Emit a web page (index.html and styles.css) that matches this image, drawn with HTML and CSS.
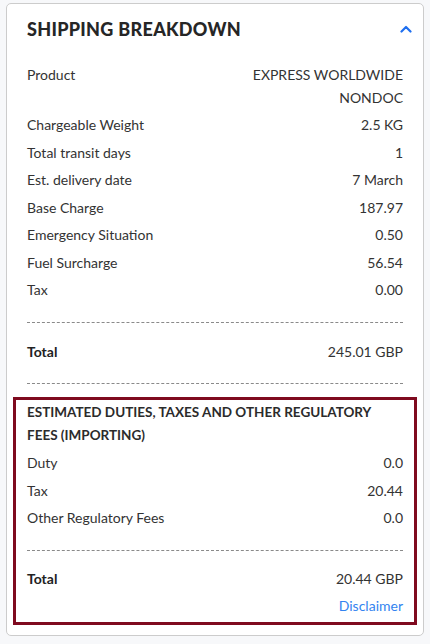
FILE: index.html
```html
<!DOCTYPE html>
<html>
<head>
<meta charset="utf-8">
<link rel="stylesheet" href="styles.css">
</head>
<body>
<div class="card">
  <div class="card-header">
    <h2 class="title">SHIPPING BREAKDOWN</h2>
    <svg class="chevron" width="12" height="8" viewBox="0 0 12 8"><path d="M1.5 6.5 L6 2 L10.5 6.5" fill="none" stroke="#1f6ff0" stroke-width="2.2" stroke-linecap="round" stroke-linejoin="round"/></svg>
  </div>
  <div class="rows">
    <div class="row"><span class="label">Product</span><span class="value narrow">EXPRESS WORLDWIDE NONDOC</span></div>
    <div class="row"><span class="label">Chargeable Weight</span><span class="value">2.5 KG</span></div>
    <div class="row"><span class="label">Total transit days</span><span class="value">1</span></div>
    <div class="row"><span class="label">Est. delivery date</span><span class="value">7 March</span></div>
    <div class="row"><span class="label">Base Charge</span><span class="value">187.97</span></div>
    <div class="row"><span class="label">Emergency Situation</span><span class="value">0.50</span></div>
    <div class="row"><span class="label">Fuel Surcharge</span><span class="value">56.54</span></div>
    <div class="row"><span class="label">Tax</span><span class="value">0.00</span></div>
  </div>
  <hr class="dash dash-a">
  <div class="row total"><span class="label">Total</span><span class="value">245.01 GBP</span></div>
  <hr class="dash dash-b">
  <div class="duties">
    <h3 class="duties-title">ESTIMATED DUTIES, TAXES AND OTHER REGULATORY FEES (IMPORTING)</h3>
    <div class="rows">
      <div class="row"><span class="label">Duty</span><span class="value">0.0</span></div>
      <div class="row"><span class="label">Tax</span><span class="value">20.44</span></div>
      <div class="row"><span class="label">Other Regulatory Fees</span><span class="value">0.0</span></div>
    </div>
    <hr class="dash dash-c">
    <div class="row total"><span class="label">Total</span><span class="value">20.44 GBP</span></div>
    <div class="disclaimer-row"><a class="disclaimer" href="#">Disclaimer</a></div>
  </div>
</div>
</body>
</html>
```
FILE: styles.css
```css
html, body {
  margin: 0;
  padding: 0;
  background: #f7f8fa;
}
body {
  font-family: "Lato", "Liberation Sans", sans-serif;
  color: #333333;
  font-size: 14px;
}
.card {
  margin: 3px 0 0 6px;
  width: 418px;
  box-sizing: border-box;
  background: #ffffff;
  border: 1px solid #cccccc;
  border-radius: 5px;
  padding: 0 20px 10px;
}
.card-header {
  display: flex;
  justify-content: space-between;
  align-items: center;
  padding-top: 10px;
  height: 30px;
}
.title {
  margin: 0;
  font-size: 18px;
  line-height: 30px;
  font-weight: 900;
  letter-spacing: 0.3px;
  color: #262626;
}
.chevron {
  margin-right: -9px;
}
.rows {
  display: flex;
  flex-direction: column;
  gap: 5px;
}
.card > .rows {
  margin-top: 20px;
}
.row {
  display: flex;
  justify-content: space-between;
  align-items: flex-start;
  line-height: 22.5px;
}
.value {
  text-align: right;
}
.value.narrow {
  max-width: 160px;
}
.dash {
  border: 0;
  border-top: 1px dashed #8a8a8a;
  margin: 0;
  height: 0;
}
.dash-a { margin-top: 20px; }
.total { margin-top: 18px; }
.total .label { font-weight: 700; color: #222; }
.dash-b { margin-top: 20px; }
.duties {
  margin: 13px -14px 0;
  border: 3px solid #7f0a1f;
  padding: 1px 11px 4px;
}
.duties-title {
  margin: 0 0 5px;
  font-size: 13.5px;
  line-height: 23px;
  font-weight: 700;
  color: #2b2b2b;
}
.dash-c { margin-top: 20px; }
.duties .total { margin-top: 17px; }
.disclaimer-row {
  display: flex;
  justify-content: flex-end;
  line-height: 22.5px;
  margin-top: 5px;
}
.disclaimer {
  color: #3383f0;
  text-decoration: none;
}
```
